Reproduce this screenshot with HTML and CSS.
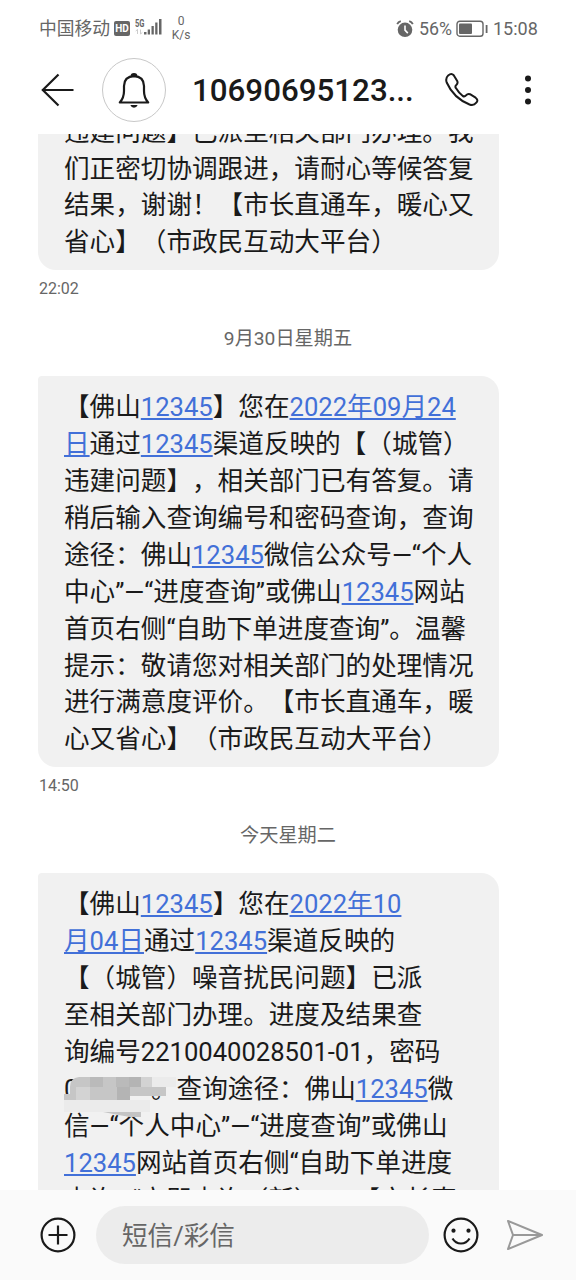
FILE: index.html
```html
<!DOCTYPE html>
<html lang="zh-CN">
<head>
<meta charset="utf-8">
<title>短信</title>
<link rel="stylesheet" href="styles.css">
</head>
<body>
<div class="phone">
  <div class="status">
    <span class="carrier">中国移动</span>
    <span class="hd">HD</span>
    <svg class="signal" width="28" height="20" viewBox="0 0 28 20">
      <text class="net" x="0" y="8.500" textLength="9.500" lengthAdjust="spacingAndGlyphs">5G</text>
      <path d="M2.500 16v-4.500l-1.800 1.500M5.500 11.500v4.500l1.800-1.500" fill="none" stroke="#ccc" stroke-width="1"/>
      <path d="M9 14h2.500v2.500H9zM12.700 11.500h2.300v5h-2.300zM16.500 8h2.300v8.500h-2.300zM20.200 4.500h2.300v12h-2.300zM24 1h2.500v15.500H24z" fill="#666"/>
    </svg>
    <span class="speed"><span>0</span><span>K/s</span></span>
    <span class="spacer"></span>
    <svg class="alarm" width="18" height="18" viewBox="0 0 18 18">
      <circle cx="9" cy="9.800" r="7.300" fill="#666"/>
      <path d="M1.200 4.200Q2.200 2 4.800 1.200M16.800 4.200Q15.800 2 13.200 1.200" fill="none" stroke="#666" stroke-width="1.800"/>
      <path d="M9 5.500v4.600l2.800 3" fill="none" stroke="#fff" stroke-width="1.600"/>
    </svg>
    <span class="percent">56%</span>
    <svg class="battery" width="33" height="18" viewBox="0 0 33 18">
      <rect x="1" y="1.200" width="26" height="15" rx="2.800" fill="none" stroke="#666" stroke-width="1.400"/>
      <rect x="3" y="3.500" width="13" height="10.500" rx="1" fill="#666"/>
      <path d="M30.600 5v8" stroke="#666" stroke-width="1.800"/>
    </svg>
    <span class="clock">15:08</span>
  </div>

  <div class="header">
    <svg class="back" width="34" height="34" viewBox="0 0 34 34" fill="none" stroke="#1a1a1a" stroke-width="2.200">
      <path d="M32.500 17H1.500M17.500 1.500 1.800 17 17.500 32.500"/>
    </svg>
    <div class="avatar">
      <svg width="32" height="36" viewBox="0 0 32 36">
        <path d="M1.800 30.500C4.500 27.500 6 24 6 19V14Q6.300 4.500 16 4.200Q25.700 4.500 26 14V19C26 24 27.500 27.500 30.200 30.500Z" fill="none" stroke="#1a1a1a" stroke-width="2.200" stroke-linejoin="round"/>
        <path d="M12.600 4.200a3.400 3.200 0 0 1 6.800 0zM12.300 33h7.400q-1.200 2.800-3.700 2.800t-3.700-2.800z" fill="#1a1a1a"/>
      </svg>
    </div>
    <div class="title">10690695123...</div>
    <svg class="call" width="36" height="36" viewBox="0 0 36 36" fill="none" stroke="#1a1a1a" stroke-width="2" stroke-linejoin="round">
      <path d="M4.200 3.400Q7.400 .700 9.700 3.200L13.200 9Q14.200 11 12.500 12.800Q10.700 14.300 11.900 16.100Q14.500 20.600 18.800 24Q20.700 25 22 23.300Q23.800 21.300 26 22.200L31.600 25.700Q34.700 28 32.300 30.700Q29.700 34 25.500 32.500Q9.500 26 2.700 10.500Q1.200 6.300 4.200 3.400Z"/>
    </svg>
    <svg class="more" width="8" height="32" viewBox="0 0 8 32" fill="#1a1a1a">
      <circle cx="4" cy="4.400" r="3"/><circle cx="4" cy="16" r="3"/><circle cx="4" cy="27.600" r="3"/>
    </svg>
  </div>

  <div class="chat">
    <div class="bubble scrolled">
      <p>违建问题】已派至相关部门办理。我</p>
      <p>们正密切协调跟进，请耐心等候答复</p>
      <p>结果，谢谢！【市长直通车，暖心又</p>
      <p>省心】（市政民互动大平台）</p>
    </div>
    <div class="time">22:02</div>
    <div class="date">9月30日星期五</div>
    <div class="bubble">
      <p>【佛山<a>12345</a>】您在<a>2022年09月24</a></p>
      <p><a>日</a>通过<a>12345</a>渠道反映的【（城管）</p>
      <p>违建问题】，相关部门已有答复。请</p>
      <p>稍后输入查询编号和密码查询，查询</p>
      <p>途径：佛山<a>12345</a>微信公众号—“个人</p>
      <p>中心”—“进度查询”或佛山<a>12345</a>网站</p>
      <p>首页右侧“自助下单进度查询”。温馨</p>
      <p>提示：敬请您对相关部门的处理情况</p>
      <p>进行满意度评价。【市长直通车，暖</p>
      <p>心又省心】（市政民互动大平台）</p>
    </div>
    <div class="time">14:50</div>
    <div class="date">今天星期二</div>
    <div class="bubble">
      <p>【佛山<a>12345</a>】您在<a>2022年10</a></p>
      <p><a>月04日</a>通过<a>12345</a>渠道反映的</p>
      <p>【（城管）噪音扰民问题】已派</p>
      <p>至相关部门办理。进度及结果查</p>
      <p>询编号2210040028501-01，密码</p>
      <p class="masked"><span class="code">0</span>。查询途径：佛山<a>12345</a>微
        <svg class="mosaic" width="118" height="42" viewBox="0 0 118 42">
          <path d="M88 0h24v10H88zM0 23h86v12H0z" fill="#ebebeb"/>
          <path d="M6 10Q6 1 15 0H88V10H102V19H66V23H0V17H6z" fill="#c6c6c6"/>
          <path d="M26 0h13v10H26zM52 0h13v10H52z" fill="#bababa"/>
          <path d="M65 0h12v10H65zM53 10h13v13H53z" fill="#b4b4b4"/>
          <path d="M77 0h11v10H77zM12 10h14v13H12z" fill="#d3d3d3"/>
          <path d="M39 35h38v5H66Q54 38 39 35z" fill="#c4c4c4"/>
        </svg></p>
      <p>信—“个人中心”—“进度查询”或佛山</p>
      <p><a>12345</a>网站首页右侧“自助下单进度</p>
      <p>查询”-“立即查询（新）”。【市长直</p>
    </div>
  </div>

  <div class="composer">
    <svg class="plus" width="36" height="36" viewBox="0 0 36 36" fill="none" stroke="#1a1a1a" stroke-width="2.200">
      <circle cx="18" cy="18" r="16.400"/><path d="M18 8.500v19M8.500 18h19"/>
    </svg>
    <div class="field">短信/彩信</div>
    <svg class="smile" width="36" height="36" viewBox="0 0 36 36" fill="none" stroke="#1a1a1a" stroke-width="2.200">
      <circle cx="18" cy="18" r="16.400"/>
      <circle cx="10.500" cy="13.700" r="2.100" fill="#1a1a1a" stroke="none"/><circle cx="25.500" cy="13.700" r="2.100" fill="#1a1a1a" stroke="none"/>
      <path d="M9.500 21.500Q12.500 26.500 18 26.500T26.500 21.500"/>
    </svg>
    <svg class="send" width="38" height="32" viewBox="0 0 38 32" fill="none" stroke="#999" stroke-width="2" stroke-linejoin="round">
      <path d="M2 2 36 16 2 30 7 16ZM7 16h29"/>
    </svg>
  </div>
</div>
</body>
</html>
```
FILE: styles.css
```css
* { box-sizing: border-box; }
body {
  margin: 0;
  background: #fff;
  color: #1a1a1a;
  font-family: Roboto, "Noto Sans CJK SC", sans-serif;
  text-spacing-trim: space-all;
}
svg { display: block; flex: none; }
.phone {
  display: flex;
  flex-direction: column;
  width: 576px;
  height: 1280px;
  overflow: hidden;
}

.status {
  display: flex;
  align-items: center;
  height: 57px;
  padding: 0 38px 0 39px;
  color: #666;
  font-size: 18px;
  line-height: 20px;
  white-space: nowrap;
}
.carrier { width: 75px; padding-top: 1px; font-size: 17.8px; }
.hd {
  width: 16px;
  height: 15px;
  border-radius: 2px;
  background: #666;
  color: #fff;
  font-size: 10px;
  font-weight: 700;
  line-height: 15px;
  text-align: center;
}
.signal { margin: 0 0 1px 5px; }
.net { font-size: 10px; font-weight: 700; fill: #666; }
.speed {
  display: flex;
  flex-direction: column;
  align-items: center;
  width: 22px;
  margin-left: 7px;
  padding-bottom: 1px;
  font-size: 12px;
  line-height: 14px;
}
.spacer { flex: 1; }
.percent { width: 37px; margin-left: 5px; padding-top: 1px; font-size: 17.8px; }
.clock { width: 45px; margin-left: 4px; padding-top: 1px; }

.header {
  display: flex;
  align-items: center;
  height: 77px;
  padding: 0 44px 11px 41px;
}
.avatar {
  display: flex;
  align-items: center;
  justify-content: center;
  width: 64px;
  height: 64px;
  margin-left: 27px;
  border: 1.500px solid #c8c8c8;
  border-radius: 50%;
}
.title {
  width: 226px;
  margin-left: 26px;
  padding-top: 2px;
  font-size: 31.300px;
  font-weight: 500;
  line-height: 36px;
  white-space: nowrap;
}
.call { margin-left: 26px; }
.more { margin-left: auto; }

.chat {
  height: 1056px;
  padding-left: 38px;
  overflow: hidden;
}
.bubble {
  width: 461px;
  padding: 13.300px 0 9.200px 26px;
  border-radius: 4px 18px 18px 18px;
  background: #f1f1f1;
  font-size: 25.6px;
  line-height: 36.900px;
  white-space: nowrap;
}
.scrolled { margin-top: -33.700px; }
.bubble p { height: 36.900px; margin: 0; }
.bubble a {
  color: #4270d8;
  text-decoration: underline;
  text-decoration-thickness: 1.500px;
  text-decoration-skip-ink: none;
  text-underline-offset: 2px;
}
.time {
  height: 36px;
  padding-left: 1px;
  color: #666;
  font-size: 16px;
  line-height: 37.500px;
}
.date {
  height: 69.700px;
  padding-right: 38px;
  color: #666;
  font-size: 19.200px;
  line-height: 66.500px;
  text-align: center;
}
.masked { position: relative; }
.code { display: inline-block; width: 87px; }
.mosaic {
  position: absolute;
  left: 0;
  top: 6px;
}

.composer {
  display: flex;
  align-items: center;
  height: 90px;
  padding: 0 0 0 40px;
  background: #fafafa;
}
.field {
  width: 333px;
  height: 58px;
  margin-left: 20px;
  padding-left: 26px;
  border-radius: 29px;
  background: #ececec;
  color: #666;
  font-size: 25.600px;
  line-height: 61px;
}
.smile { margin-left: 14px; }
.send { margin-left: 27px; }
```
